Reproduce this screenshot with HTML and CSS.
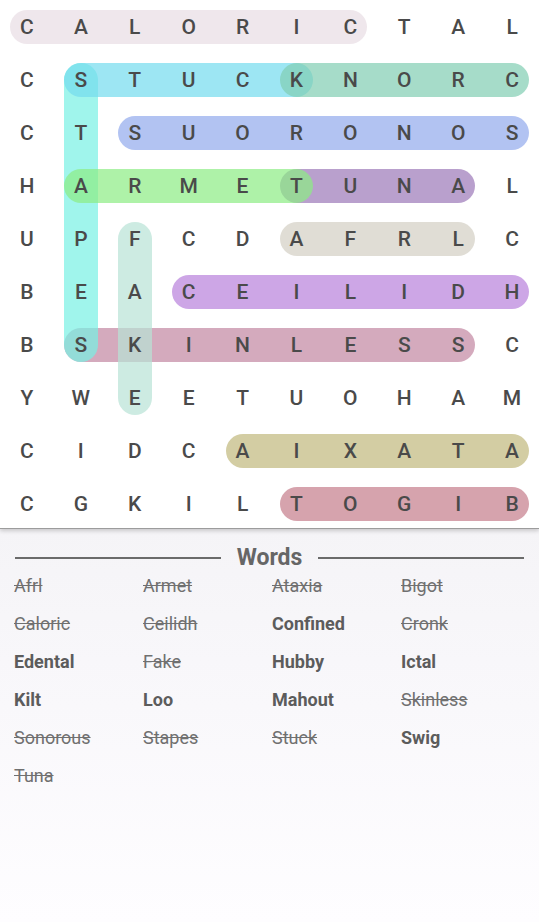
FILE: index.html
```html
<!DOCTYPE html>
<html>
<head>
<meta charset="utf-8">
<link rel="stylesheet" href="styles.css">
</head>
<body>
<div class="board">
  <div class="layer marks">
    <div class="hl h c-caloric" style="grid-area: 1 / 1 / 2 / 8"></div>
    <div class="hl h c-skinless" style="grid-area: 7 / 2 / 8 / 10"></div>
    <div class="hl v c-stapes" style="grid-area: 2 / 2 / 8 / 3"></div>
    <div class="hl h c-stuck" style="grid-area: 2 / 2 / 3 / 7"></div>
    <div class="hl h c-cronk" style="grid-area: 2 / 6 / 3 / 11"></div>
    <div class="hl h c-sonorous" style="grid-area: 3 / 3 / 4 / 11"></div>
    <div class="hl h c-tuna" style="grid-area: 4 / 6 / 5 / 10"></div>
    <div class="hl h c-armet" style="grid-area: 4 / 2 / 5 / 7"></div>
    <div class="hl v c-fake" style="grid-area: 5 / 3 / 9 / 4"></div>
    <div class="hl h c-afrl" style="grid-area: 5 / 6 / 6 / 10"></div>
    <div class="hl h c-ceilidh" style="grid-area: 6 / 4 / 7 / 11"></div>
    <div class="hl h c-ataxia" style="grid-area: 9 / 5 / 10 / 11"></div>
    <div class="hl h c-bigot" style="grid-area: 10 / 6 / 11 / 11"></div>
  </div>
  <div class="layer letters">
    <span>C</span><span>A</span><span>L</span><span>O</span><span>R</span><span>I</span><span>C</span><span>T</span><span>A</span><span>L</span>
    <span>C</span><span>S</span><span>T</span><span>U</span><span>C</span><span>K</span><span>N</span><span>O</span><span>R</span><span>C</span>
    <span>C</span><span>T</span><span>S</span><span>U</span><span>O</span><span>R</span><span>O</span><span>N</span><span>O</span><span>S</span>
    <span>H</span><span>A</span><span>R</span><span>M</span><span>E</span><span>T</span><span>U</span><span>N</span><span>A</span><span>L</span>
    <span>U</span><span>P</span><span>F</span><span>C</span><span>D</span><span>A</span><span>F</span><span>R</span><span>L</span><span>C</span>
    <span>B</span><span>E</span><span>A</span><span>C</span><span>E</span><span>I</span><span>L</span><span>I</span><span>D</span><span>H</span>
    <span>B</span><span>S</span><span>K</span><span>I</span><span>N</span><span>L</span><span>E</span><span>S</span><span>S</span><span>C</span>
    <span>Y</span><span>W</span><span>E</span><span>E</span><span>T</span><span>U</span><span>O</span><span>H</span><span>A</span><span>M</span>
    <span>C</span><span>I</span><span>D</span><span>C</span><span>A</span><span>I</span><span>X</span><span>A</span><span>T</span><span>A</span>
    <span>C</span><span>G</span><span>K</span><span>I</span><span>L</span><span>T</span><span>O</span><span>G</span><span>I</span><span>B</span>
  </div>
</div>
<section class="words">
  <div class="words-head">
    <span class="rule"></span>
    <h2>Words</h2>
    <span class="rule"></span>
  </div>
  <ul class="word-list">
    <li class="found">Afrl</li>
    <li class="found">Armet</li>
    <li class="found">Ataxia</li>
    <li class="found">Bigot</li>
    <li class="found">Caloric</li>
    <li class="found">Ceilidh</li>
    <li class="todo">Confined</li>
    <li class="found">Cronk</li>
    <li class="todo">Edental</li>
    <li class="found">Fake</li>
    <li class="todo">Hubby</li>
    <li class="todo">Ictal</li>
    <li class="todo">Kilt</li>
    <li class="todo">Loo</li>
    <li class="todo">Mahout</li>
    <li class="found">Skinless</li>
    <li class="found">Sonorous</li>
    <li class="found">Stapes</li>
    <li class="found">Stuck</li>
    <li class="todo">Swig</li>
    <li class="found">Tuna</li>
  </ul>
</section>
</body>
</html>
```
FILE: styles.css
```css
html, body {
  margin: 0;
  padding: 0;
}
body {
  width: 539px;
  height: 922px;
  background: #ffffff;
  font-family: Roboto, "Liberation Sans", sans-serif;
  display: flex;
  flex-direction: column;
  overflow: hidden;
}
.board {
  display: grid;
  height: 528px;
  border-bottom: 1px solid #9c9c9c;
  box-shadow: 0 2px 4px rgba(0, 0, 0, 0.18);
  position: relative;
  z-index: 1;
  background: #ffffff;
}
.layer {
  grid-area: 1 / 1;
  display: grid;
  grid-template-columns: repeat(10, 1fr);
  grid-template-rows: repeat(10, 53px);
}
.hl {
  border-radius: 17px;
}
.hl.h {
  height: 34px;
  align-self: center;
  margin: 0 10px;
}
.hl.v {
  width: 34px;
  justify-self: center;
  margin: 9.5px 0;
}
.c-caloric  { background: rgba(232, 221, 228, 0.7); }
.c-stuck    { background: rgba(116, 219, 238, 0.7); }
.c-cronk    { background: rgba(128, 205, 178, 0.7); }
.c-stapes   { background: rgba(119, 241, 228, 0.7); }
.c-sonorous { background: rgba(146, 169, 236, 0.7); }
.c-armet    { background: rgba(139, 236, 131, 0.7); }
.c-tuna     { background: rgba(155, 119, 184, 0.7); }
.c-fake     { background: rgba(184, 226, 214, 0.7); }
.c-afrl     { background: rgba(211, 206, 195, 0.7); }
.c-ceilidh  { background: rgba(184, 128, 219, 0.7); }
.c-skinless { background: rgba(194, 134, 161, 0.7); }
.c-ataxia   { background: rgba(192, 184, 124, 0.7); }
.c-bigot    { background: rgba(196, 124, 138, 0.7); }

.letters span {
  display: flex;
  align-items: center;
  justify-content: center;
  font-size: 21px;
  font-weight: 500;
  color: #4a4a4a;
}
.words {
  flex: 1;
  background: linear-gradient(to bottom, #f5f4f7 0%, #f9f8fb 45%, #fefdff 100%);
  padding-top: 20px;
}
.words-head {
  display: flex;
  align-items: center;
  gap: 16px;
  padding: 0 15px;
  height: 18px;
}
.rule {
  flex: 1;
  height: 2px;
  background: #6b6b6b;
}
.words-head h2 {
  margin: 0;
  font-size: 23px;
  font-weight: 700;
  color: #666666;
  line-height: 18px;
}
.word-list {
  list-style: none;
  margin: 0;
  padding: 0 0 0 14px;
  display: grid;
  grid-template-columns: repeat(4, 129px);
  grid-auto-rows: 38px;
}
.word-list li {
  font-size: 18px;
  line-height: 37px;
}
.found {
  color: #707070;
  text-decoration: line-through;
}
.todo {
  color: #5c5c5c;
  font-weight: 700;
}
```
